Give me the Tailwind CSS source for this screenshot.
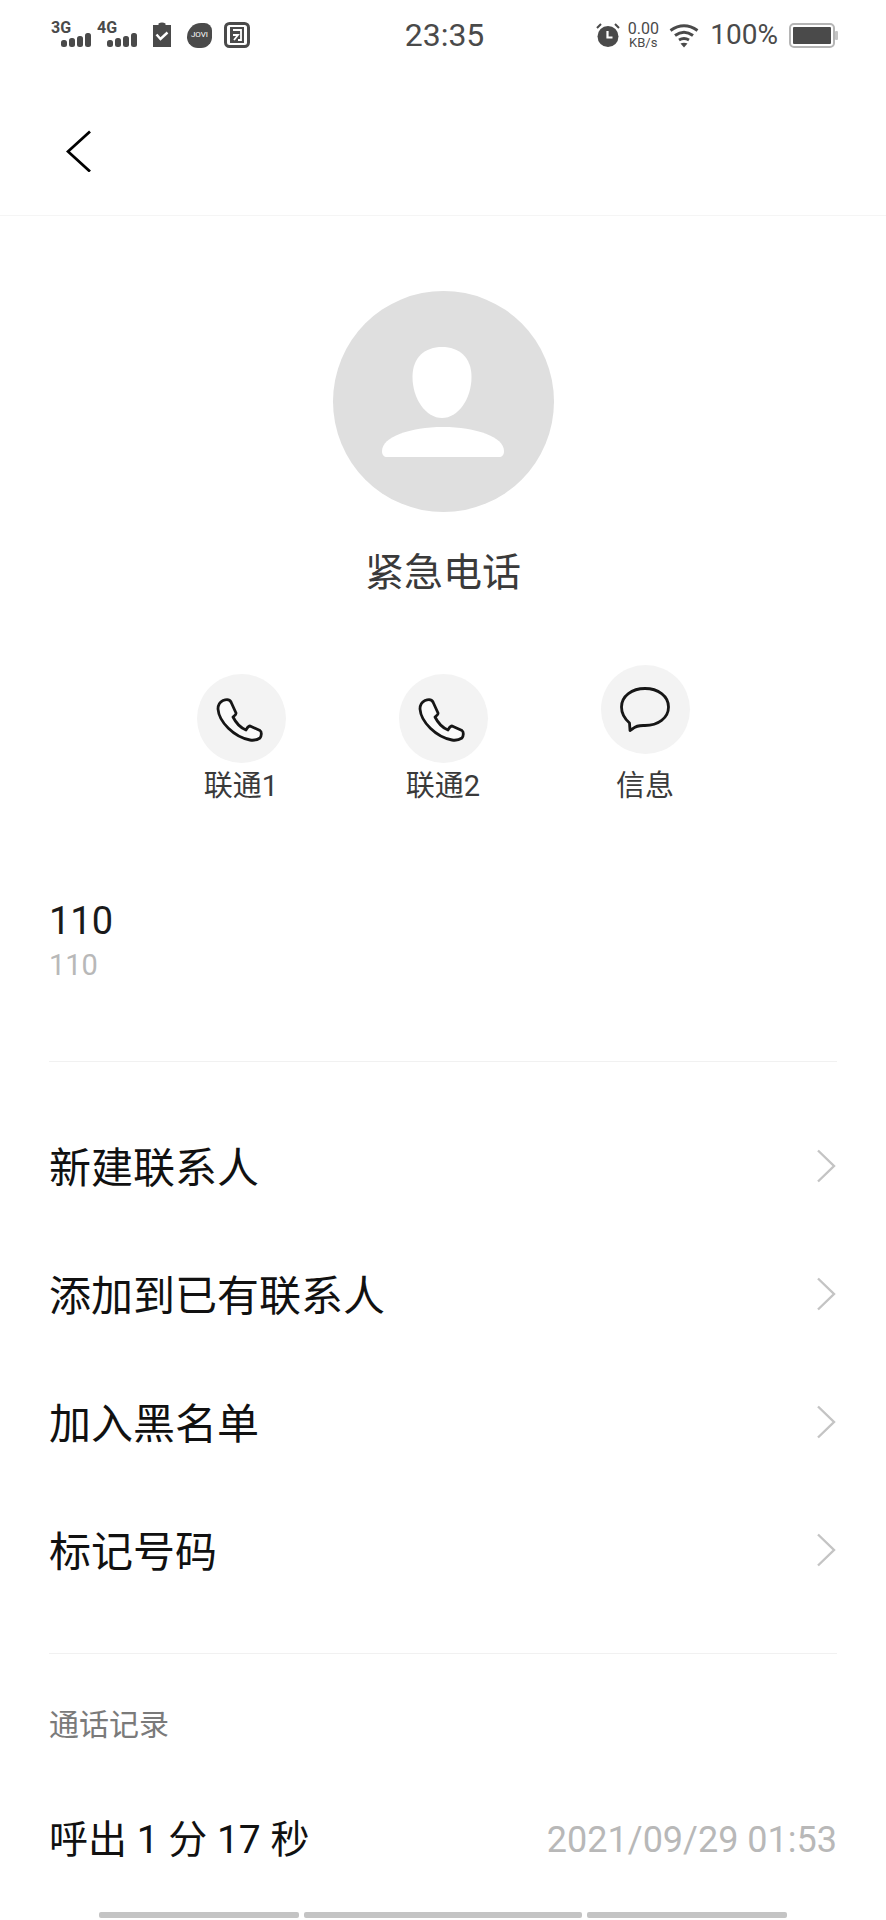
<!DOCTYPE html>
<html lang="zh-CN">

<head>
    <meta charset="UTF-8">
    <meta name="viewport" content="width=device-width, initial-scale=1.0">
    <title>紧急电话</title>
    <script src="https://cdn.jsdelivr.net/npm/@tailwindcss/browser@4"></script>
</head>

<body class="bg-white font-['Roboto','Noto_Sans_CJK_SC',sans-serif] text-black overflow-hidden">
    <div class="w-[886px] h-[1920px] flex flex-col relative">
        <!-- status bar -->
        <div class="h-[70px] flex items-center justify-between pl-[51px] pr-[48px] text-[#4a4a4a]">
            <div class="flex items-center w-[300px]">
                <div class="relative w-[39px] h-[26px]">
                    <span class="absolute left-0 -top-[2px] text-[16px] leading-[15px] font-bold">3G</span>
                    <svg class="absolute left-[10px] top-[11px]" width="30" height="15" viewBox="0 0 30 15" fill="#4a4a4a">
                        <rect x="0" y="7" width="6" height="7" rx="2.500" /><rect x="8" y="5" width="6" height="9" rx="2.500" /><rect x="16" y="3" width="6" height="11" rx="2.500" /><rect x="24" y="0" width="6" height="14" rx="2.500" />
                    </svg>
                </div>
                <div class="relative w-[39px] h-[26px] ml-[7px]">
                    <span class="absolute left-0 -top-[2px] text-[16px] leading-[15px] font-bold">4G</span>
                    <svg class="absolute left-[10px] top-[11px]" width="30" height="15" viewBox="0 0 30 15" fill="#4a4a4a">
                        <rect x="0" y="7" width="6" height="7" rx="2.500" /><rect x="8" y="5" width="6" height="9" rx="2.500" /><rect x="16" y="3" width="6" height="11" rx="2.500" /><rect x="24" y="0" width="6" height="14" rx="2.500" />
                    </svg>
                </div>
                <svg class="ml-[17px]" width="18" height="26" viewBox="0 0 18 26">
                    <path fill="#4a4a4a" d="M0 3h5.500V1.500Q9 -.5 12.500 1.500V3H18V25H0Z" />
                    <path fill="none" stroke="#fff" stroke-width="2.400" d="M3.500 12.500l4 4.500 7-6.500" />
                </svg>
                <div class="ml-[16px] w-[25px] h-[25px] bg-[#4a4a4a] rounded-[65%_35%_50%_50%] flex items-center justify-center text-[8px] leading-none text-white">JOVI</div>
                <svg class="ml-[12px]" width="26" height="26" viewBox="0 0 26 26">
                    <rect x="1.500" y="1.500" width="23" height="23" rx="4" fill="none" stroke="#4a4a4a" stroke-width="3" />
                    <rect x="6" y="5" width="14" height="16" fill="#4a4a4a" />
                    <path fill="none" stroke="#fff" stroke-width="1.800" d="M9 8h8v10h-3M9 13h5l-4 5" />
                </svg>
            </div>
            <div class="text-[32px] leading-none text-[#4a4a4a]">23:35</div>
            <div class="flex items-center justify-end w-[300px]">
                <svg width="24" height="26" viewBox="0 0 24 26">
                    <circle cx="12" cy="14.500" r="10.500" fill="#4a4a4a" />
                    <path fill="none" stroke="#4a4a4a" stroke-width="2" d="M1 6l4-4M23 6l-4-4" />
                    <path fill="none" stroke="#fff" stroke-width="2.200" d="M11.500 9v6.500h5" />
                </svg>
                <div class="ml-[7px] w-[32px] flex flex-col items-center text-[#4a4a4a]">
                    <span class="text-[16px] leading-[15px]">0.00</span>
                    <span class="text-[13px] leading-[13px]">KB/s</span>
                </div>
                <svg class="ml-[10px]" width="30" height="26" viewBox="0 0 30 26" fill="none" stroke="#4a4a4a" stroke-width="3">
                    <path d="M1.500 8.500Q15 -1 28.500 8.500" /><path d="M6 13.500Q15 7 24 13.500" /><path d="M10 18Q15 15 20 18" />
                    <path fill="#4a4a4a" stroke="none" d="M11.500 21.500Q15 20 18.500 21.500L15 25.500Z" />
                </svg>
                <span class="ml-[11px] text-[28px] leading-none text-[#4a4a4a]">100%</span>
                <svg class="ml-[11px]" width="49" height="26" viewBox="0 0 49 26">
                    <rect x="1" y="2" width="44" height="23" rx="4" fill="none" stroke="#b5b5b5" stroke-width="2" />
                    <rect x="4" y="5" width="38" height="17" rx="1" fill="#4a4a4a" />
                    <rect x="46" y="9" width="3" height="9" rx="1" fill="#c4c4c4" />
                </svg>
            </div>
        </div>

        <!-- header -->
        <div class="h-[146px] flex items-center pl-[66px] pt-[16px] border-b border-[#f5f5f5]">
            <svg width="26" height="42" viewBox="0 0 26 42" fill="none" stroke="#000" stroke-width="2.800">
                <path d="M24 1.500L2 21.500l22 20" />
            </svg>
        </div>

        <!-- contact -->
        <div class="flex flex-col items-center pt-[75px]">
            <div class="w-[221px] h-[221px] rounded-full bg-[#dfdfdf] flex flex-col items-center justify-center">
                <svg width="122" height="110" viewBox="0 0 122 110" fill="#fff">
                    <path d="M60 0C77 0 89.500 10 89.500 30C89.500 52 76 71 60 71C44 71 30.500 52 30.500 30C30.500 10 43 0 60 0Z" />
                    <path d="M0 104C0 90 28 80 61 80C94 80 122 90 122 104C122 108 120 110 117 110H5C2 110 0 108 0 104Z" />
                </svg>
            </div>
            <div class="mt-[33px] text-[39px] leading-[56px] text-[#3a3a3a]">紧急电话</div>
        </div>

        <!-- actions -->
        <div class="flex justify-center items-end mt-[64px]">
            <div class="w-[202px] flex flex-col items-center">
                <div class="w-[89px] h-[89px] rounded-full bg-[#f3f3f3] flex items-center justify-center">
                    <svg width="64" height="64" viewBox="0 0 64 64" fill="#fafafa" stroke="#161616" stroke-width="2.800" stroke-linejoin="round">
                        <path d="M14 13.500C18 12 21 13 22 15L27 26C27.500 27.500 25 29 24 30C27 36 32 41 37 43C38 41.500 39 39 41 39L51 43.500C53 45 52.500 49 51 51C48 53 44 53.500 41 53C25 50 10 35 9 22C9 18 11 15 14 13.500Z" />
                    </svg>
                </div>
                <div class="mt-[3px] text-[29px] leading-[40px] text-[#3a3a3a]">联通1</div>
            </div>
            <div class="w-[202px] flex flex-col items-center">
                <div class="w-[89px] h-[89px] rounded-full bg-[#f3f3f3] flex items-center justify-center">
                    <svg width="64" height="64" viewBox="0 0 64 64" fill="#fafafa" stroke="#161616" stroke-width="2.800" stroke-linejoin="round">
                        <path d="M14 13.500C18 12 21 13 22 15L27 26C27.500 27.500 25 29 24 30C27 36 32 41 37 43C38 41.500 39 39 41 39L51 43.500C53 45 52.500 49 51 51C48 53 44 53.500 41 53C25 50 10 35 9 22C9 18 11 15 14 13.500Z" />
                    </svg>
                </div>
                <div class="mt-[3px] text-[29px] leading-[40px] text-[#3a3a3a]">联通2</div>
            </div>
            <div class="w-[202px] flex flex-col items-center">
                <div class="w-[89px] h-[89px] rounded-full bg-[#f3f3f3] flex items-center justify-center">
                    <svg width="50" height="46" viewBox="0 0 50 46" fill="none" stroke="#161616" stroke-width="2.800" stroke-linejoin="round">
                        <path d="M25 1.500C38 1.500 48.500 9 48.500 20C48.500 31 38 38.500 25 38.500C21 38.500 17 38 13 41.500L10 43.500L9.500 36C5 32 1.500 27 1.500 20C1.500 9 12 1.500 25 1.500Z" />
                    </svg>
                </div>
                <div class="mt-[12px] text-[29px] leading-[40px] text-[#3a3a3a]">信息</div>
            </div>
        </div>

        <!-- number -->
        <div class="mx-[49px] mt-[92px] h-[164px] border-b border-[#f1f1f1]">
            <div class="text-[38px] leading-[46px] text-[#1a1a1a]">110</div>
            <div class="mt-[1px] text-[29px] leading-[40px] text-[#b8b8b8]">110</div>
        </div>

        <!-- menu -->
        <div class="mx-[49px] pt-[42px] pb-[37px] border-b border-[#f1f1f1] flex flex-col">
            <div class="h-[128px] flex items-center justify-between text-[42px] text-[#111]">
                <span>新建联系人</span>
                <svg class="mb-[5px]" width="22" height="34" viewBox="0 0 22 34" fill="none" stroke="#c4c4c4" stroke-width="2.400"><path d="M3 1.500L19 17L3 32.500" /></svg>
            </div>
            <div class="h-[128px] flex items-center justify-between text-[42px] text-[#111]">
                <span>添加到已有联系人</span>
                <svg class="mb-[5px]" width="22" height="34" viewBox="0 0 22 34" fill="none" stroke="#c4c4c4" stroke-width="2.400"><path d="M3 1.500L19 17L3 32.500" /></svg>
            </div>
            <div class="h-[128px] flex items-center justify-between text-[42px] text-[#111]">
                <span>加入黑名单</span>
                <svg class="mb-[5px]" width="22" height="34" viewBox="0 0 22 34" fill="none" stroke="#c4c4c4" stroke-width="2.400"><path d="M3 1.500L19 17L3 32.500" /></svg>
            </div>
            <div class="h-[128px] flex items-center justify-between text-[42px] text-[#111]">
                <span>标记号码</span>
                <svg class="mb-[5px]" width="22" height="34" viewBox="0 0 22 34" fill="none" stroke="#c4c4c4" stroke-width="2.400"><path d="M3 1.500L19 17L3 32.500" /></svg>
            </div>
        </div>

        <!-- call log -->
        <div class="mx-[49px] mt-[51px] text-[30px] leading-[40px] text-[#7a7a7a]">通话记录</div>
        <div class="mx-[49px] mt-[69px] flex items-center justify-between">
            <span class="text-[39px] leading-[52px] text-[#111]">呼出 1 分 17 秒</span>
            <span class="text-[36px] leading-[52px] text-[#b8b8b8]">2021/09/29 01:53</span>
        </div>

        <!-- scroll hint bars -->
        <div class="absolute left-[99px] top-[1912px] flex gap-[5px]">
            <div class="w-[200px] h-[6px] rounded-[2px] bg-[#c4c4c4]"></div>
            <div class="w-[278px] h-[6px] rounded-[2px] bg-[#c4c4c4]"></div>
            <div class="w-[200px] h-[6px] rounded-[2px] bg-[#c4c4c4]"></div>
        </div>
    </div>
</body>

</html>
